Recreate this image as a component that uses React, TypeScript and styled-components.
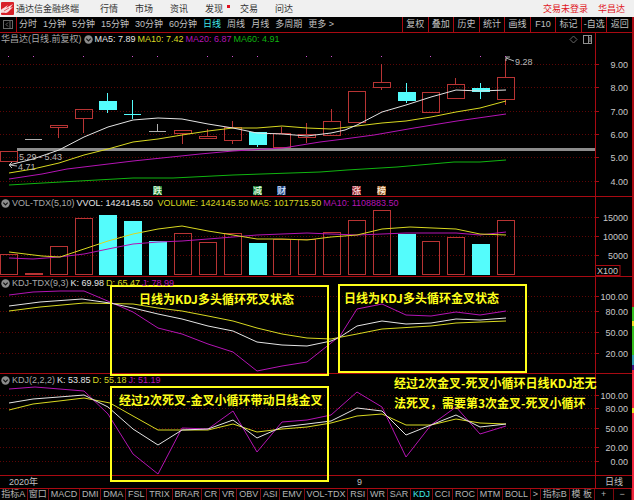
import React from "react";
import styled, { createGlobalStyle } from "styled-components";

const RED = "#a80a12";
const UP = "#b83434";
const DOWN = "#54fcfc";
const WHITE = "#e4e4e4";
const YELLOW = "#d8d820";
const MAGENTA = "#b414b4";
const GREEN = "#10b410";
const GRAY = "#a8a8a8";
const NOTE = "#ffff1a";
const FONT = '"Liberation Sans", "Noto Sans CJK SC", sans-serif';

const GlobalStyle = createGlobalStyle`
  * { box-sizing: border-box; }
  body { margin: 0; background: #000; font-family: ${FONT}; font-size: 9px; }
  button { font: inherit; color: inherit; background: none; border: 0; padding: 0; margin: 0; white-space: nowrap; cursor: pointer; }
`;

const Page = styled.div`
  min-height: 100vh;
  display: grid;
  grid-template-rows: auto 1fr;
  color: #c0c0c0;
`;

const Header = styled.header`
  display: flex;
  align-items: center;
  height: 17px;
  padding: 0 9px 0 1px;
  background: #f0f0f0;
  color: #333;
  line-height: 14px;
`;

const Brand = styled.div`
  display: flex;
  align-items: center;
  gap: 2px;
  width: 99px;
  white-space: nowrap;
`;

const MainMenu = styled.nav`
  display: flex;
  gap: 17px;
  flex: 1;
`;

const MenuButton = styled.button`
  position: relative;
`;

const Badge = styled.span`
  position: absolute;
  top: 3px;
  right: -7px;
  width: 3px;
  height: 3px;
  background: #e01020;
`;

const Account = styled.div`
  display: flex;
  gap: 10px;
  color: #e0141c;
`;

const Body = styled.div`
  display: grid;
  grid-template-columns: minmax(0, 1fr) 2px;
`;

const EdgeStrip = styled.div`
  background: linear-gradient(
    to bottom,
    #a80a12 0 60%,
    #38c020 60% 63%,
    #f0e020 63% 64%,
    #38c020 64% 70%,
    #30a0b0 70% 72%,
    #401080 72% 73%,
    #f02840 73% 81%,
    #f0e020 81% 82%,
    #f02840 82% 100%
  );
`;

const Desk = styled.main`
  display: grid;
  grid-template-rows: 16px 1fr 12px;
  min-width: 0;
`;

const Toolbar = styled.div`
  display: flex;
  border-bottom: 1px solid ${RED};
  line-height: 15px;
`;

const SideToggle = styled.button`
  display: flex;
  align-items: center;
  justify-content: center;
  width: 17px;
  border-right: 1px solid ${RED};
`;

const Periods = styled.div`
  display: flex;
  flex: 1;
  gap: 6px;
  padding-left: 2px;
`;

const PeriodButton = styled.button<{ $on?: boolean }>`
  color: ${(p) => (p.$on ? "#40e8e8" : "#c0c0c0")};
`;

const Actions = styled.div`
  display: grid;
  grid-template-columns: repeat(9, 1fr);
  width: 230px;
`;

const ActionButton = styled.button`
  border-left: 1px solid ${RED};
`;

const Charts = styled.div`
  position: relative;
  display: grid;
  min-height: 400px;
  grid-template-rows: minmax(0, 164fr) minmax(0, 80fr) minmax(0, 97fr) minmax(0, 102fr) 12px;
`;

const Panel = styled.section`
  display: grid;
  grid-template-columns: minmax(0, 1fr) 37px;
  grid-template-rows: minmax(0, 1fr);
  min-height: 0;
  border-bottom: 1px solid ${RED};
`;

const PlotCell = styled.div`
  display: grid;
  min-height: 0;
  grid-template-rows: minmax(0, 1fr);
  grid-template-columns: minmax(0, 1fr);
  > * { grid-area: 1 / 1; }
`;

const Drawing = styled.svg`
  display: block;
  width: 100%;
  height: 0;
  min-height: 100%;
  overflow: hidden;
`;

const AxisCell = styled.div`
  min-height: 0;
  border-left: 1px solid ${RED};
`;

const Legend = styled.div`
  z-index: 1;
  align-self: start;
  display: flex;
  align-items: center;
  gap: 2px;
  height: 12px;
  padding: 0 3px 0 1px;
  line-height: 12px;
  white-space: nowrap;
`;

const LegendItem = styled.span<{ $color: string }>`
  color: ${(p) => p.$color};
`;

const LegendTools = styled.span`
  display: flex;
  gap: 5px;
  margin-left: auto;
`;

const IconButton = styled.button`
  display: flex;
`;

const Timeline = styled.div`
  display: grid;
  grid-template-columns: minmax(0, 1fr) 37px;
  line-height: 12px;
`;

const Dates = styled.div`
  display: grid;
  grid-template-columns: 348fr 238fr;
  padding-left: 9px;
`;

const PeriodName = styled.div`
  border-left: 1px solid ${RED};
  text-align: center;
`;

const Indicators = styled.div`
  display: grid;
  grid-template-columns: 49px minmax(0, 1fr) 54px 37px;
  border-top: 1px solid ${RED};
  line-height: 11px;
`;

const TabGroup = styled.div`
  display: flex;
  min-width: 0;
`;

const Tab = styled.button<{ $on?: boolean }>`
  flex: 1 1 auto;
  border-right: 1px solid #7c080e;
  color: ${(p) => (p.$on ? "#40e8e8" : "#b4b4b4")};
`;

const Note = styled.div<{ $x: number; $y: number; $w: number; $h: number; $framed?: boolean }>`
  position: absolute;
  left: ${(p) => (p.$x / 632) * 100}%;
  top: ${(p) => (p.$y / 455) * 100}%;
  width: ${(p) => (p.$w / 632) * 100}%;
  height: ${(p) => (p.$h / 455) * 100}%;
  padding-top: ${(p) => (p.$framed ? 2 : 0)}px;
  border: ${(p) => (p.$framed ? `2px solid ${NOTE}` : "0")};
  color: ${NOTE};
  font-family: "Noto Sans CJK SC", sans-serif;
  font-size: 12px;
  font-weight: 700;
  line-height: 20px;
  white-space: nowrap;
  pointer-events: none;
`;

const NoteText = styled.p<{ $indent: number }>`
  margin: 0;
  padding-left: ${(p) => p.$indent}px;
`;

type Pt = [number, number];

const STEP = 24.85;
const xAt = (i: number) => 9 + STEP * i;

/* high, body top, body bottom, low, kind */
type Candle = [number, number, number, number, "up" | "down" | "flat"];
const candles: Candle[] = [
  [151, 151, 162, 162, "up"],
  [139, 139, 139, 139, "flat"],
  [125, 125, 128, 138, "up"],
  [109, 109, 119, 133, "up"],
  [93, 101, 110, 113, "down"],
  [100, 114, 115, 119, "down"],
  [124, 131, 131, 131, "flat"],
  [130, 130, 134, 144, "up"],
  [129, 136, 139, 139, "up"],
  [121, 127, 141, 144, "up"],
  [132, 132, 145, 147, "down"],
  [127, 133, 148, 148, "up"],
  [123, 134, 138, 143, "up"],
  [109, 121, 136, 136, "up"],
  [91, 91, 123, 123, "up"],
  [64, 82, 88, 90, "up"],
  [83, 92, 101, 103, "down"],
  [92, 92, 113, 113, "up"],
  [78, 84, 99, 99, "up"],
  [83, 88, 92, 99, "down"],
  [59, 77, 100, 105, "up"],
];

const volumes: [number, boolean][] = [
  [254, true], [273, true], [246, true], [218, true], [215, false], [221, false], [241, false],
  [233, true], [242, true], [233, true], [243, false], [239, true], [239, true], [232, true],
  [220, true], [210, true], [234, false], [241, true], [237, true], [244, false], [220, true],
];

const ma5: Pt[] = [[9,165],[33,159],[59,150],[84,137],[108,127],[133,120],[158,118],[182,119],[208,124],[233,128],[257,133],[282,134],[307,136],[331,133],[345,130],[357,125],[382,112],[406,105],[431,97],[456,90],[480,91],[506,90]];
const ma10: Pt[] = [[9,173],[33,169],[59,163],[84,155],[108,149],[133,142],[158,139],[182,135],[208,131],[233,128],[257,128],[282,126],[307,128],[331,129],[357,126],[382,123],[406,121],[431,117],[456,112],[480,108],[506,101]];
const ma20: Pt[] = [[9,179],[42,174],[67,169],[100,165],[133,161],[200,154],[233,151],[283,148],[320,142],[344,139],[374,135],[414,128],[457,121],[506,114]];
const ma60: Pt[] = [[9,185],[43,183],[133,178],[173,178],[233,175],[320,172],[347,170],[397,167],[454,162],[480,162],[506,160]];

const vol5: Pt[] = [[9,252],[42,256],[60,257],[84,249],[108,241],[133,234],[158,229],[182,226],[208,231],[233,235],[257,239],[282,239],[307,240],[331,237],[357,235],[382,229],[410,227],[456,229],[480,234],[506,235]];
const vol10: Pt[] = [[9,258],[33,259],[59,257],[84,254],[108,249],[133,244],[158,242],[182,241],[208,239],[233,237],[257,235],[282,234],[307,233],[331,234],[357,235],[382,234],[406,233],[456,233],[480,235],[506,232]];

const kA: Pt[] = [[9,306],[40,302],[82,299],[110,303],[133,308],[158,314],[182,319],[208,326],[233,331],[257,342],[282,345],[307,346],[331,341],[340,337],[357,326],[382,321],[406,324],[431,323],[456,319],[480,320],[506,318]];
const dA: Pt[] = [[9,311],[40,307],[84,303],[133,304],[158,308],[182,311],[208,316],[233,321],[257,328],[282,334],[307,338],[331,339],[357,334],[382,329],[431,326],[456,323],[506,321]];
const jA: Pt[] = [[9,295],[33,292],[60,291],[84,291],[110,302],[133,312],[158,328],[182,334],[208,344],[233,352],[257,371],[282,366],[307,362],[331,343],[340,336],[357,309],[382,304],[406,315],[431,316],[456,312],[480,315],[506,311]];

const kB: Pt[] = [[9,403],[33,399],[59,397],[84,395],[108,407],[133,429],[158,445],[182,430],[208,429],[233,420],[257,438],[282,427],[307,424],[331,421],[357,408],[382,411],[406,435],[431,425],[456,415],[480,427],[506,424]];
const dB: Pt[] = [[9,410],[33,404],[59,401],[84,398],[110,403],[133,416],[158,430],[208,430],[233,424],[257,432],[282,429],[307,427],[331,423],[357,416],[382,414],[406,425],[431,425],[456,419],[480,423],[506,424]];
const jB: Pt[] = [[9,389],[35,387],[84,391],[108,414],[133,454],[158,474],[182,428],[208,429],[233,411],[257,452],[282,422],[307,420],[331,415],[357,392],[382,407],[406,457],[431,425],[456,407],[480,434],[506,426]];

const Line = ({ pts, color }: { pts: Pt[]; color: string }) => (
  <polyline points={pts.map((p) => p.join(",")).join(" ")} fill="none" stroke={color} strokeWidth="1" vectorEffect="non-scaling-stroke" />
);

const Grid = ({ rows }: { rows: number[] }) => (
  <g shapeRendering="crispEdges">
    {rows.map((y) => (
      <path key={y} d={`M0 ${y + 0.5}H595`} stroke="#5c0606" strokeDasharray="1 2" />
    ))}
  </g>
);

const Candles = () => (
  <g shapeRendering="crispEdges">
    {candles.map(([hi, t, b, lo, kind], i) => {
      const x = Math.round(xAt(i));
      const c = kind === "up" ? UP : kind === "down" ? DOWN : "#b0b0b0";
      return (
        <g key={i} stroke={c} fill={kind === "down" ? c : "none"}>
          {hi < t && <path d={`M${x - 0.5} ${hi}V${t}`} />}
          {lo > b && <path d={`M${x - 0.5} ${b}V${lo}`} />}
          {kind === "flat" || b - t < 2 ? (
            <path d={`M${x - 9} ${t + 0.5}H${x + 8}`} />
          ) : (
            <rect x={x - 8.5} y={t + 0.5} width="17" height={b - t - 1} />
          )}
        </g>
      );
    })}
  </g>
);

const Volumes = () => (
  <g shapeRendering="crispEdges">
    {volumes.map(([t, up], i) => {
      const x = Math.round(xAt(i));
      return <rect key={i} x={x - 8.5} y={t + 0.5} width="17" height={274 - t} stroke={up ? UP : DOWN} fill={up ? "none" : DOWN} />;
    })}
  </g>
);

interface PlotProps {
  top: number;
  height: number;
  label: string;
  legend: React.ReactNode;
  ticks: [number, string][];
  marks?: React.ReactNode;
  unit?: string;
  children: React.ReactNode;
}

const Plot = ({ top, height, label, legend, ticks, marks, unit, children }: PlotProps) => {
  const pct = (y: number) => `${((y - top) / height) * 100}%`;
  return (
    <Panel aria-label={label}>
      <PlotCell>
        <Legend>{legend}</Legend>
        <Drawing>
          <svg viewBox={`0 ${top} 595 ${height}`} width="100%" height="100%" preserveAspectRatio="none">
            {children}
          </svg>
          {marks}
        </Drawing>
      </PlotCell>
      <AxisCell>
        <Drawing>
          {ticks.map(([y, text]) => (
            <g key={text}>
              <line x1="0" x2="3" y1={pct(y + 0.5)} y2={pct(y + 0.5)} stroke={RED} />
              <text x="32" y={pct(y)} dy="4" textAnchor="end" fill="#c8c8c8" fontSize="9">{text}</text>
            </g>
          ))}
          {unit && (
            <svg y={pct(265)} overflow="visible">
              <rect x="-1" y="0.5" width="25" height="10" fill="#000" stroke={RED} />
              <text x="1" y="9" fill="#c8c8c8" fontSize="9">{unit}</text>
            </svg>
          )}
        </Drawing>
      </AxisCell>
    </Panel>
  );
};

const Fold = () => (
  <IconButton aria-label="指标菜单">
    <svg width="9" height="9" viewBox="0 0 9 9">
      <circle cx="4.5" cy="4.5" r="4.2" fill="#8c8c8c" />
      <path d="M2.3 3.6 4.5 5.8 6.7 3.6" fill="none" stroke="#111" strokeWidth="1.2" />
    </svg>
  </IconButton>
);

const px = (x: number) => `${(x / 595) * 100}%`;
const py = (y: number) => `${((y - 33) / 163) * 100}%`;

const flags: [number, string, string, string][] = [
  [157, "跌", "#1c7a30", "#e8ffe8"],
  [257, "减", "#1c7a30", "#e8ffe8"],
  [281, "财", "#1c3c78", "#d8e8ff"],
  [356, "涨", "#8c1c24", "#ffe0e0"],
  [381, "榜", "#8c5424", "#fff0d8"],
];

const PriceMarks = () => (
  <>
    {flags.map(([x, t, bg, fg]) => (
      <svg key={t} x={px(x)} y={py(190)} overflow="visible">
        <rect x="-4" y="-4" width="9" height="9" fill={bg} />
        <text x="0.5" y="4" textAnchor="middle" fontSize="9" fontWeight="500" fill={fg}>{t}</text>
      </svg>
    ))}
    <g fill="#b8b8b8" fontSize="9">
      <text x={px(19)} y={py(160)}>5.29 - 5.43</text>
      <text x={px(18)} y={py(170)}>4.71</text>
      <text x={px(515)} y={py(65)}>9.28</text>
    </g>
  </>
);

const tabs = ["MACD", "DMI", "DMA", "FSL", "TRIX", "BRAR", "CR", "VR", "OBV", "ASI", "EMV", "VOL-TDX", "RSI", "WR", "SAR", "KDJ", "CCI", "ROC", "MTM", "BOLL", ">"];
const periods = ["分时", "1分钟", "5分钟", "15分钟", "30分钟", "60分钟", "日线", "周线", "月线", "多周期", "更多 >"];
const actions = ["复权", "叠加", "历史", "统计", "画线", "F10", "标记", "-自选", "返回"];
const dots = [0, 1, 3, 5, 6, 8, 9, 10, 12, 13, 15, 17, 19, 20];

export default function App() {
  return (
    <Page>
      <GlobalStyle />
      <Header>
        <Brand>
          <svg width="13" height="13" viewBox="0 0 13 13">
            <rect width="13" height="13" rx="1" fill="#d82028" />
            <path d="M0 8C1 6 2 7 4 5L7 3 5 6 12 2 9 6 12 5 7 10C5 12 3 10 0 11Z" fill="#f8dcdc" />
            <path d="M3 9 8 6" stroke="#d84048" strokeWidth=".8" />
          </svg>
          通达信金融终端
        </Brand>
        <MainMenu>
          {["行情", "市场", "资讯", "发现", "交易", "问达"].map((t) => (
            <MenuButton key={t}>
              {t}
              {t === "发现" && <Badge />}
            </MenuButton>
          ))}
        </MainMenu>
        <Account>
          <button>交易未登录</button>
          <button>华昌达</button>
        </Account>
      </Header>
      <Body>
        <Desk>
          <Toolbar>
            <SideToggle aria-label="侧栏">
              <svg width="10" height="9" viewBox="0 0 10 9" fill="none" stroke="#686868">
                <rect x=".5" y=".5" width="9" height="8" />
                <path d="M7 .5V8.500M5 2.500 3 4.500 5 6.500" />
              </svg>
            </SideToggle>
            <Periods>
              {periods.map((t) => (
                <PeriodButton key={t} $on={t === "日线"}>{t}</PeriodButton>
              ))}
            </Periods>
            <Actions>
              {actions.map((t) => (
                <ActionButton key={t}>{t}</ActionButton>
              ))}
            </Actions>
          </Toolbar>

          <Charts>
            <Plot
              top={33}
              height={163}
              label="日线"
              ticks={[[64, "9.00"], [87, "8.00"], [111, "7.00"], [134, "6.00"], [157, "5.00"], [181, "4.00"]]}
              marks={<PriceMarks />}
              legend={
                <>
                  <LegendItem $color={GRAY}>华昌达(日线.前复权)</LegendItem>
                  <Fold />
                  <LegendItem $color={WHITE}>MA5: 7.89</LegendItem>
                  <LegendItem $color={YELLOW}>MA10: 7.42</LegendItem>
                  <LegendItem $color={MAGENTA}>MA20: 6.87</LegendItem>
                  <LegendItem $color={GREEN}>MA60: 4.91</LegendItem>
                  <LegendTools>
                    <IconButton aria-label="标记">
                      <svg width="9" height="9" viewBox="0 0 9 9" fill="none" stroke="#686868">
                        <path d="M4.500 1 8 4.500 4.500 8 1 4.500Z" />
                      </svg>
                    </IconButton>
                    <IconButton aria-label="布局">
                      <svg width="9" height="9" viewBox="0 0 9 9" fill="none" stroke="#909090">
                        <rect x=".5" y=".5" width="8" height="8" />
                        <path d="M5.500 .5V8.500M7 2V7" />
                      </svg>
                    </IconButton>
                  </LegendTools>
                </>
              }
            >
              <Grid rows={[64, 87, 111, 134, 157, 181]} />
              <rect x="17" y="148" width="578" height="3" fill="#8c8c8c" />
              {dots.map((i) => (
                <rect key={i} x={Math.round(xAt(i)) - 1} y="56" width="1" height="1" fill="#d050d0" />
              ))}
              <Candles />
              <Line pts={ma60} color={GREEN} />
              <Line pts={ma20} color={MAGENTA} />
              <Line pts={ma10} color={YELLOW} />
              <Line pts={ma5} color={WHITE} />
              <path d="M514 61 506 58M506 61V57H510M17 166 9 165M12 162 9 165 12 168" fill="none" stroke="#b8b8b8" />
            </Plot>

            <Plot
              top={197}
              height={79}
              label="成交量"
              unit="X100"
              ticks={[[217, "15000"], [236, "10000"], [255, "5000"]]}
              legend={
                <>
                  <Fold />
                  <LegendItem $color={GRAY}>VOL-TDX(5,10)</LegendItem>
                  <LegendItem $color={WHITE}>VVOL: 1424145.50</LegendItem>
                  <LegendItem $color={YELLOW}>&nbsp;VOLUME: 1424145.50</LegendItem>
                  <LegendItem $color={YELLOW}>MA5: 1017715.50</LegendItem>
                  <LegendItem $color={MAGENTA}>MA10: 1108883.50</LegendItem>
                </>
              }
            >
              <Grid rows={[217, 236, 255]} />
              <Volumes />
              <Line pts={vol10} color={MAGENTA} />
              <Line pts={vol5} color={YELLOW} />
            </Plot>

            <Plot
              top={277}
              height={96}
              label="KDJ-TDX"
              ticks={[[296, "100.00"], [311, "80.00"], [332, "50.00"], [353, "20.00"]]}
              legend={
                <>
                  <Fold />
                  <LegendItem $color={GRAY}>KDJ-TDX(9,3)</LegendItem>
                  <LegendItem $color={WHITE}>K: 69.98</LegendItem>
                  <LegendItem $color={YELLOW}>D: 65.47</LegendItem>
                  <LegendItem $color={MAGENTA}>J: 78.99</LegendItem>
                </>
              }
            >
              <Grid rows={[296, 311, 332, 353]} />
              <Line pts={dA} color={YELLOW} />
              <Line pts={jA} color={MAGENTA} />
              <Line pts={kA} color={WHITE} />
            </Plot>

            <Plot
              top={374}
              height={101}
              label="KDJ"
              ticks={[[395, "100.00"], [408, "80.00"], [428, "50.00"], [447, "20.00"], [461, "0.00"]]}
              legend={
                <>
                  <Fold />
                  <LegendItem $color={GRAY}>KDJ(2,2,2)</LegendItem>
                  <LegendItem $color={WHITE}>K: 53.85</LegendItem>
                  <LegendItem $color={YELLOW}>D: 55.18</LegendItem>
                  <LegendItem $color={MAGENTA}>J: 51.19</LegendItem>
                </>
              }
            >
              <Grid rows={[395, 408, 428, 447, 461]} />
              <Line pts={dB} color={YELLOW} />
              <Line pts={jB} color={MAGENTA} />
              <Line pts={kB} color={WHITE} />
            </Plot>

            <Timeline>
              <Dates>
                <span>2020年</span>
                <span>9</span>
              </Dates>
              <PeriodName>日线</PeriodName>
            </Timeline>

            <Note $x={110} $y={252} $w={219} $h={91} $framed>
              <NoteText $indent={27}>日线为KDJ多头循环死叉状态</NoteText>
            </Note>
            <Note $x={338} $y={251} $w={189} $h={89} $framed>
              <NoteText $indent={4}>日线为KDJ多头循环金叉状态</NoteText>
            </Note>
            <Note $x={110} $y={353} $w={219} $h={96} $framed>
              <NoteText $indent={7}>经过2次死叉-金叉小循环带动日线金叉</NoteText>
            </Note>
            <Note $x={394} $y={340} $w={201} $h={40}>
              <NoteText $indent={0}>经过2次金叉-死叉小循环日线KDJ还无</NoteText>
              <NoteText $indent={0}>法死叉，需要第3次金叉-死叉小循环</NoteText>
            </Note>
          </Charts>

          <Indicators>
            <TabGroup>
              <Tab>指标A</Tab>
              <Tab>窗口</Tab>
            </TabGroup>
            <TabGroup>
              {tabs.map((t) => (
                <Tab key={t} $on={t === "KDJ"}>{t}</Tab>
              ))}
            </TabGroup>
            <TabGroup>
              <Tab>指标B</Tab>
              <Tab>模 板</Tab>
            </TabGroup>
            <TabGroup>
              <Tab aria-label="放大">+</Tab>
              <Tab aria-label="缩小">−</Tab>
            </TabGroup>
          </Indicators>
        </Desk>
        <EdgeStrip />
      </Body>
    </Page>
  );
}
